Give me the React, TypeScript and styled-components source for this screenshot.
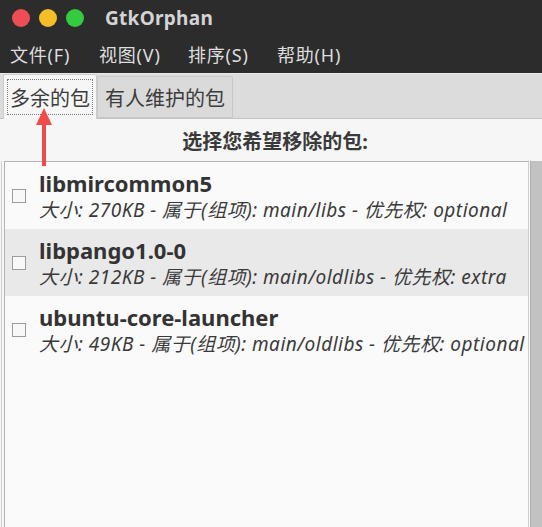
import React from "react";
import styled, { createGlobalStyle } from "styled-components";

const Global = createGlobalStyle`
  html, body { margin: 0; padding: 0; background: #f6f6f6; }
  * { box-sizing: border-box; }
`;

const FONT = `"Noto Sans", "Noto Sans CJK SC", sans-serif`;

const Window = styled.div`
  width: 542px;
  height: 527px;
  overflow: hidden;
  display: flex;
  flex-direction: column;
  font-family: ${FONT};
  position: relative;
`;

const TitleBar = styled.div`
  height: 36px;
  background: #2c2c2c;
  display: flex;
  align-items: center;
  padding-left: 12px;
`;

const Lights = styled.div`
  display: flex;
  gap: 9px;
  margin-right: 21px;
`;

const Light = styled.span<{ $c: string }>`
  width: 18px;
  height: 18px;
  border-radius: 50%;
  background: ${(p) => p.$c};
`;

const Title = styled.div`
  color: #d4d4d4;
  font-weight: bold;
  font-size: 19px;
  letter-spacing: 0.3px;
`;

const MenuBar = styled.div`
  height: 37px;
  background: #2c2c2c;
  display: flex;
  align-items: center;
  padding-left: 10px;
  padding-bottom: 2px;
  gap: 22px;
`;

const MenuItem = styled.div`
  color: #dedede;
  font-size: 18px;
  letter-spacing: 0.8px;
  width: 67px;
  white-space: nowrap;
`;

const TabStrip = styled.div`
  height: 46px;
  background: #dcdcdc;
  border-top: 1px solid #e8e8e8;
  border-bottom: 1px solid #c4c4c4;
  display: flex;
  align-items: flex-end;
  padding-left: 3px;
`;

const Tab = styled.div<{ $active?: boolean }>`
  height: ${(p) => (p.$active ? 45 : 42)}px;
  margin-bottom: ${(p) => (p.$active ? -1 : 0)}px;
  padding: ${(p) => (p.$active ? "4px 3px" : "0 7px")};
  background: ${(p) => (p.$active ? "#f6f6f6" : "#dadada")};
  border: 1px solid ${(p) => (p.$active ? "#cdcdcd" : "#c8c8c8")};
  border-bottom: ${(p) => (p.$active ? "none" : "1px solid #c8c8c8")};
  border-radius: 2px 2px 0 0;
  display: flex;
  align-items: ${(p) => (p.$active ? "stretch" : "center")};
  font-size: 20px;
  color: #3c3c3c;
`;

const Focus = styled.div`
  border: 1px dotted #7a7a7a;
  padding: 0 2px;
  display: flex;
  align-items: center;
`;

const Content = styled.div`
  flex: 1;
  background: #f6f6f6;
  display: flex;
  flex-direction: column;
`;

const Heading = styled.div`
  height: 42px;
  display: flex;
  align-items: center;
  justify-content: center;
  font-weight: bold;
  font-size: 20px;
  color: #3a3a3a;
  padding-left: 8px;
`;

const Frame = styled.div`
  flex: 1;
  display: flex;
  padding-left: 2px;
  border-left: 1px solid #cfcfcf;
  margin-left: 1px;
`;

const List = styled.div`
  flex: 1;
  background: #fafafa;
  border-top: 1px solid #b4b4b4;
  border-left: 1px solid #b4b4b4;
  border-right: 1px solid #cfcfcf;
  display: flex;
  flex-direction: column;
`;

const Trough = styled.div`
  width: 12px;
  background: #c2c2c2;
  border-left: 1px solid #b0b0b0;
  margin-left: 1px;
`;

const Row = styled.div<{ $alt?: boolean }>`
  height: 67px;
  background: ${(p) => (p.$alt ? "#e9e9e9" : "#fafafa")};
  display: flex;
  align-items: center;
  padding-left: 7px;
`;

const Check = styled.span`
  width: 14px;
  height: 14px;
  border: 1px solid #9c9c9c;
  background: #f8f8f8;
  margin-right: 13px;
  flex-shrink: 0;
`;

const Texts = styled.div`
  display: flex;
  flex-direction: column;
  color: #3a3a3a;
`;

const Name = styled.div`
  font-weight: bold;
  font-size: 22px;
  line-height: 29px;
  color: #333;
`;

const Desc = styled.div`
  font-style: italic;
  font-size: 19px;
  line-height: 25px;
  white-space: nowrap;
  letter-spacing: 0.5px;
`;

const Arrow = styled.svg`
  position: absolute;
  left: 34px;
  top: 106px;
`;

const packages = [
  { name: "libmircommon5", desc: "大小: 270KB - 属于(组项): main/libs - 优先权: optional" },
  { name: "libpango1.0-0", desc: "大小: 212KB - 属于(组项): main/oldlibs - 优先权: extra" },
  { name: "ubuntu-core-launcher", desc: "大小: 49KB - 属于(组项): main/oldlibs - 优先权: optional" },
];

export default function App() {
  return (
    <Window>
      <Global />
      <TitleBar>
        <Lights>
          <Light $c="#ef4d56" />
          <Light $c="#f6bd2b" />
          <Light $c="#34cb41" />
        </Lights>
        <Title>GtkOrphan</Title>
      </TitleBar>
      <MenuBar>
        <MenuItem>文件(F)</MenuItem>
        <MenuItem>视图(V)</MenuItem>
        <MenuItem>排序(S)</MenuItem>
        <MenuItem>帮助(H)</MenuItem>
      </MenuBar>
      <TabStrip>
        <Tab $active>
          <Focus>多余的包</Focus>
        </Tab>
        <Tab>有人维护的包</Tab>
      </TabStrip>
      <Content>
        <Heading>选择您希望移除的包:</Heading>
        <Frame>
          <List>
            {packages.map((p, i) => (
              <Row key={p.name} $alt={i % 2 === 1}>
                <Check />
                <Texts>
                  <Name>{p.name}</Name>
                  <Desc>{p.desc}</Desc>
                </Texts>
              </Row>
            ))}
          </List>
          <Trough />
        </Frame>
      </Content>
      <Arrow width="20" height="62" viewBox="0 0 20 62">
        <rect x="8" y="14" width="4" height="46" fill="#f04a4a" />
        <polygon points="10,2 2,19 18,19" fill="#f04a4a" />
      </Arrow>
    </Window>
  );
}
